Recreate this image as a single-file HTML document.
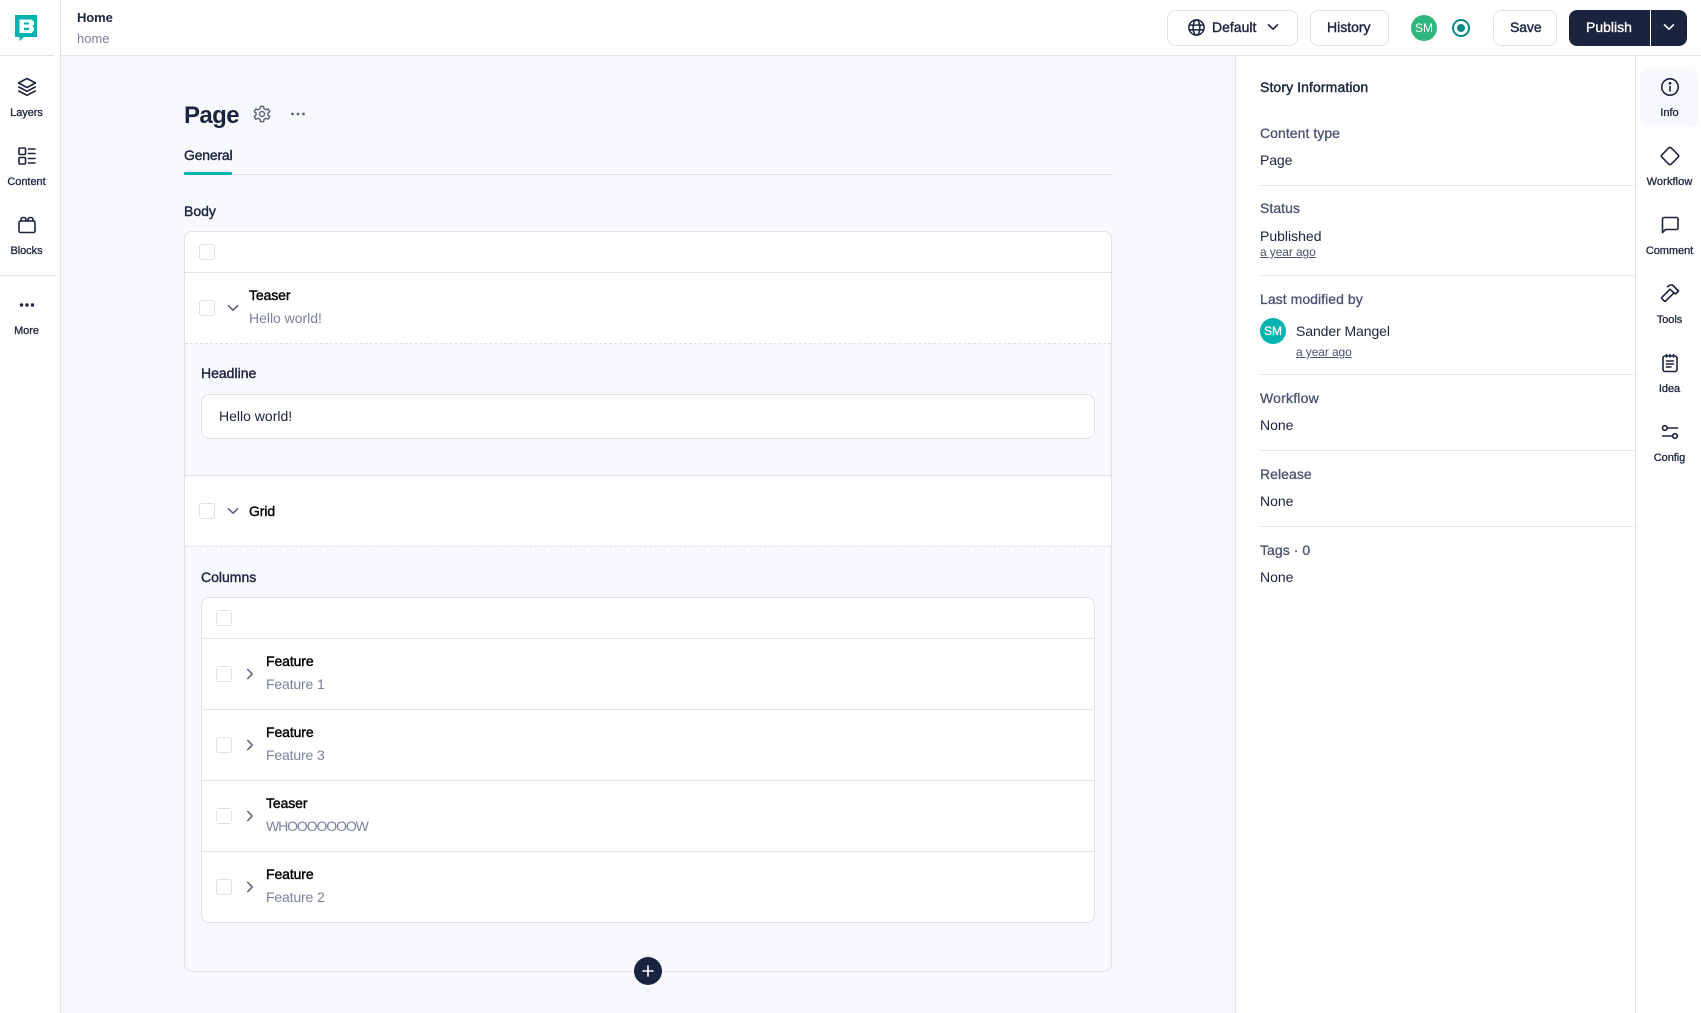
<!DOCTYPE html>
<html lang="en"><head><meta charset="utf-8"><title>Home</title>
<style>
html,body{margin:0;padding:0}
body{width:1701px;height:1013px;position:relative;overflow:hidden;background:#fff;font-family:"Liberation Sans",Arial,sans-serif;color:#1b243f;font-size:14px}
.a{position:absolute;box-sizing:border-box}
.t{position:absolute;white-space:nowrap;line-height:20px;height:20px}
.m{-webkit-text-stroke:.4px currentColor}
.n{font-size:11px;text-align:center;-webkit-text-stroke:.3px currentColor;letter-spacing:-.05px}
.k{color:#000}.s{color:#7b819c;letter-spacing:-.15px}.l{color:#4a5272;-webkit-text-stroke:.3px currentColor;letter-spacing:.05px}
.u{font-size:12px;text-decoration:underline;color:#4a5272;letter-spacing:-.1px}
.c{position:absolute;width:16px;height:16px;box-sizing:border-box;border:1px solid #dfe1e9;border-radius:3px;background:#fff}
.h{position:absolute;height:1px;background:#e0e2ea}
.b{position:absolute;box-sizing:border-box;background:#fff;border:1px solid #dfe1e9;border-radius:8px}
svg{position:absolute;fill:none;stroke:#1b243f;stroke-width:1.6;stroke-linecap:round;stroke-linejoin:round;overflow:visible}
svg.g{stroke:#5c627d}
</style></head><body>

<!-- main background -->
<div class="a" style="left:61px;top:56px;width:1175px;height:957px;background:#f8f9fd"></div>
<!-- structural lines -->
<div class="a" style="left:60px;top:0;width:1px;height:1013px;background:#e0e3ee"></div>
<div class="h" style="left:61px;top:55px;width:1640px"></div>
<div class="h" style="left:0;top:55px;width:54px;background:#e0e3ee"></div>
<div class="h" style="left:0;top:275px;width:56px"></div>
<div class="a" style="left:1235px;top:56px;width:1px;height:957px;background:#e6e7ee"></div>
<div class="a" style="left:1635px;top:56px;width:1px;height:957px;background:#e0e2ea"></div>

<!-- logo -->
<svg style="left:15px;top:15px" width="22" height="26" viewBox="0 0 22 26"><path style="stroke:none;fill:#00b3b0" d="M0 0H22V22H9L4.500 26V22H0Z"/><path style="stroke:none;fill:#fff" fill-rule="evenodd" d="M4.500 4.500H16.500L19 6.500V9.500L17.500 11 19 12.500V15.500L16.500 18H4.500ZM9 7.500V9.500H14V7.500ZM9 12.800V15H14V12.800Z"/></svg>

<!-- left nav -->
<svg style="left:17px;top:77px" width="20" height="20" viewBox="0 0 20 20"><path d="M10 1.500 18.500 6 10 10.500 1.500 6Z"/><path d="M1.800 10 10 14.300 18.200 10M1.800 14 10 18.300 18.200 14"/></svg>
<div class="t n" style="left:0;width:53px;top:103px">Layers</div>
<svg style="left:17px;top:146px" width="20" height="20" viewBox="0 0 20 20"><rect x="2" y="2" width="6.500" height="6.500" rx="1"/><rect x="2" y="11.500" width="6.500" height="6.500" rx="1"/><path d="M11.500 3H18M11.500 7.500H18M11.500 12.500H18M11.500 17H18"/></svg>
<div class="t n" style="left:0;width:53px;top:172px">Content</div>
<svg style="left:17px;top:215px" width="20" height="20" viewBox="0 0 20 20"><rect x="2" y="6" width="16" height="11.500" rx="1.500"/><path d="M4 6V4.500a2 2 0 0 1 2-2h1a2 2 0 0 1 2 2V6M11 6V4.500a2 2 0 0 1 2-2h1a2 2 0 0 1 2 2V6"/></svg>
<div class="t n" style="left:0;width:53px;top:241px">Blocks</div>
<svg style="left:17px;top:295px" width="20" height="20" viewBox="0 0 20 20"><circle cx="4.500" cy="10" r=".9" fill="#1b243f"/><circle cx="10" cy="10" r=".9" fill="#1b243f"/><circle cx="15.500" cy="10" r=".9" fill="#1b243f"/></svg>
<div class="t n" style="left:0;width:53px;top:321px">More</div>

<!-- top bar left -->
<div class="t" style="left:77px;top:8px;font-size:13px;font-weight:700;letter-spacing:-.1px">Home</div>
<div class="t s" style="left:77px;top:29px;font-size:13px;letter-spacing:0">home</div>

<!-- top bar right -->
<div class="b" style="left:1167px;top:10px;width:131px;height:36px"></div>
<svg style="left:1187px;top:18px" width="19" height="19" viewBox="0 0 20 20"><circle cx="10" cy="10" r="8"/><ellipse cx="10" cy="10" rx="3.600" ry="8"/><path d="M2.300 7.500H17.700M2.300 12.500H17.700"/></svg>
<div class="t m" style="left:1212px;top:17px">Default</div>
<svg style="left:1267px;top:21px" width="12" height="12" viewBox="0 0 12 12"><path d="M1.500 3.800 6 8.200 10.500 3.800"/></svg>
<div class="b" style="left:1310px;top:10px;width:79px;height:36px"></div>
<div class="t m" style="left:1327px;top:17px">History</div>
<div class="a" style="left:1411px;top:15px;width:26px;height:26px;border-radius:50%;background:#2fb67c;color:#fff;text-align:center;font-size:12px;line-height:27px">SM</div>
<svg style="left:1451px;top:18px" width="20" height="20" viewBox="0 0 20 20"><circle cx="10" cy="10" r="8" style="stroke:#0c8c80;stroke-width:2"/><circle cx="10" cy="10" r="4" style="stroke:none;fill:#0c8c80"/></svg>
<div class="b" style="left:1493px;top:10px;width:64px;height:36px"></div>
<div class="t m" style="left:1510px;top:17px;letter-spacing:-.1px">Save</div>
<div class="a" style="left:1569px;top:10px;width:81px;height:36px;background:#1b243f;border-radius:8px 0 0 8px"></div>
<div class="t" style="left:1586px;top:17px;color:#fff;-webkit-text-stroke:.35px #fff">Publish</div>
<div class="a" style="left:1651px;top:10px;width:36px;height:36px;background:#1b243f;border-radius:0 8px 8px 0"></div>
<svg style="left:1663px;top:21px;stroke:#fff" width="12" height="12" viewBox="0 0 12 12"><path d="M1.500 3.800 6 8.200 10.500 3.800"/></svg>

<!-- page head -->
<div class="t" style="left:184px;top:106px;font-size:24px;font-weight:700;letter-spacing:-.6px">Page</div>
<svg class="g" style="left:253px;top:105px" width="18" height="18" viewBox="0 0 20 20"><circle cx="10" cy="10" r="2.800"/><path d="M8.300 1.500H11.700L12.300 4.200 14.300 5.300 16.900 4.400 18.600 7.300 16.600 9.100V11L18.600 12.800 16.900 15.700 14.300 14.800 12.300 15.900 11.700 18.500H8.300L7.700 15.900 5.700 14.800 3.100 15.700 1.400 12.800 3.400 11V9.100L1.400 7.300 3.100 4.400 5.700 5.300 7.700 4.200Z"/></svg>
<svg class="g" style="left:289px;top:105px" width="18" height="18" viewBox="0 0 18 18"><circle cx="3.500" cy="9" r=".6" fill="#5c627d"/><circle cx="9" cy="9" r=".6" fill="#5c627d"/><circle cx="14.500" cy="9" r=".6" fill="#5c627d"/></svg>
<div class="t m" style="left:184px;top:145px;letter-spacing:-.2px">General</div>
<div class="h" style="left:184px;top:174px;width:928px;background:#dcdee6"></div>
<div class="a" style="left:184px;top:172px;width:48px;height:3px;background:#00b3b0;border-radius:1px"></div>
<div class="t m" style="left:184px;top:201px">Body</div>

<!-- Body box -->
<div class="a" style="left:184px;top:231px;width:928px;height:741px;border:1px solid #dfe1e9;border-radius:8px;background:#f8f9fd"></div>
<div class="a" style="left:185px;top:232px;width:926px;height:112px;background:#fff;border-radius:7px 7px 0 0"></div>
<div class="a" style="left:185px;top:476px;width:926px;height:70px;background:#fff"></div>
<div class="c" style="left:199px;top:244px"></div>
<div class="h" style="left:185px;top:272px;width:926px"></div>
<div class="c" style="left:199px;top:300px"></div>
<svg class="g" style="left:227px;top:302px" width="12" height="12" viewBox="0 0 12 12"><path d="M1.500 3.800 6 8.200 10.500 3.800"/></svg>
<div class="t m k" style="left:249px;top:285px;letter-spacing:-.1px">Teaser</div>
<div class="t s" style="left:249px;top:308px;letter-spacing:-.02px">Hello world!</div>
<div class="a" style="left:185px;top:343px;width:926px;border-top:1px dashed #dfe1e9"></div>

<div class="t m" style="left:201px;top:363px">Headline</div>
<div class="b" style="left:201px;top:394px;width:894px;height:45px"></div>
<div class="t" style="left:219px;top:406px">Hello world!</div>
<div class="h" style="left:185px;top:475px;width:926px"></div>

<div class="c" style="left:199px;top:503px"></div>
<svg class="g" style="left:227px;top:505px" width="12" height="12" viewBox="0 0 12 12"><path d="M1.500 3.800 6 8.200 10.500 3.800"/></svg>
<div class="t m k" style="left:249px;top:501px;letter-spacing:-.1px">Grid</div>
<div class="a" style="left:185px;top:546px;width:926px;border-top:1px dashed #dfe1e9"></div>
<div class="t m" style="left:201px;top:567px">Columns</div>

<!-- Columns box -->
<div class="b" style="left:201px;top:597px;width:894px;height:326px"></div>
<div class="c" style="left:216px;top:610px"></div>
<div class="h" style="left:202px;top:638px;width:892px"></div>

<div class="c" style="left:216px;top:666px"></div>
<svg class="g" style="left:244px;top:668px" width="12" height="12" viewBox="0 0 12 12"><path d="M3.800 1.500 8.200 6 3.800 10.500"/></svg>
<div class="t m k" style="left:266px;top:651px;letter-spacing:-.1px">Feature</div>
<div class="t s" style="left:266px;top:674px">Feature 1</div>
<div class="h" style="left:202px;top:709px;width:892px"></div>

<div class="c" style="left:216px;top:737px"></div>
<svg class="g" style="left:244px;top:739px" width="12" height="12" viewBox="0 0 12 12"><path d="M3.800 1.500 8.200 6 3.800 10.500"/></svg>
<div class="t m k" style="left:266px;top:722px;letter-spacing:-.1px">Feature</div>
<div class="t s" style="left:266px;top:745px">Feature 3</div>
<div class="h" style="left:202px;top:780px;width:892px"></div>

<div class="c" style="left:216px;top:808px"></div>
<svg class="g" style="left:244px;top:810px" width="12" height="12" viewBox="0 0 12 12"><path d="M3.800 1.500 8.200 6 3.800 10.500"/></svg>
<div class="t m k" style="left:266px;top:793px;letter-spacing:-.1px">Teaser</div>
<div class="t s" style="left:266px;top:816px;letter-spacing:-1.1px">WHOOOOOOOW</div>
<div class="h" style="left:202px;top:851px;width:892px"></div>

<div class="c" style="left:216px;top:879px"></div>
<svg class="g" style="left:244px;top:881px" width="12" height="12" viewBox="0 0 12 12"><path d="M3.800 1.500 8.200 6 3.800 10.500"/></svg>
<div class="t m k" style="left:266px;top:864px;letter-spacing:-.1px">Feature</div>
<div class="t s" style="left:266px;top:887px">Feature 2</div>

<!-- plus -->
<div class="a" style="left:634px;top:957px;width:28px;height:28px;border-radius:50%;background:#1b243f"></div>
<svg style="left:642px;top:965px;stroke:#fff" width="12" height="12" viewBox="0 0 12 12"><path d="M6 1V11M1 6H11"/></svg>

<!-- story info -->
<div class="t m" style="left:1260px;top:77px;letter-spacing:.1px">Story Information</div>
<div class="t l" style="left:1260px;top:123px">Content type</div>
<div class="t" style="left:1260px;top:150px;letter-spacing:-.1px">Page</div>
<div class="h" style="left:1260px;top:185px;width:375px;background:#e8e9ef"></div>
<div class="t l" style="left:1260px;top:198px">Status</div>
<div class="t" style="left:1260px;top:226px">Published</div>
<div class="t u" style="left:1260px;top:242px">a year ago</div>
<div class="h" style="left:1260px;top:275px;width:375px;background:#e8e9ef"></div>
<div class="t l" style="left:1260px;top:289px">Last modified by</div>
<div class="a" style="left:1260px;top:318px;width:26px;height:26px;border-radius:50%;background:#00b3b0;color:#fff;text-align:center;font-size:12px;line-height:27px;-webkit-text-stroke:.3px #fff">SM</div>
<div class="t" style="left:1296px;top:321px;letter-spacing:-.08px">Sander Mangel</div>
<div class="t u" style="left:1296px;top:342px">a year ago</div>
<div class="h" style="left:1260px;top:374px;width:375px;background:#e8e9ef"></div>
<div class="t l" style="left:1260px;top:388px;letter-spacing:.2px">Workflow</div>
<div class="t" style="left:1260px;top:415px">None</div>
<div class="h" style="left:1260px;top:450px;width:375px;background:#e8e9ef"></div>
<div class="t l" style="left:1260px;top:464px">Release</div>
<div class="t" style="left:1260px;top:491px">None</div>
<div class="h" style="left:1260px;top:526px;width:375px;background:#e8e9ef"></div>
<div class="t l" style="left:1260px;top:540px">Tags · 0</div>
<div class="t" style="left:1260px;top:567px">None</div>

<!-- right rail -->
<div class="a" style="left:1640px;top:68px;width:59px;height:59px;border-radius:8px;background:#f8f9fd"></div>
<svg style="left:1660px;top:77px" width="20" height="20" viewBox="0 0 20 20"><circle cx="10" cy="10" r="8.200"/><path d="M10 9.500V14"/><circle cx="10" cy="6.300" r=".6" fill="#1b243f"/></svg>
<div class="t n" style="left:1640px;width:59px;top:103px">Info</div>
<svg style="left:1660px;top:146px" width="20" height="20" viewBox="0 0 20 20"><path d="M8.900 1.800a1.600 1.600 0 0 1 2.200 0L18.200 8.900a1.600 1.600 0 0 1 0 2.200L11.100 18.200a1.600 1.600 0 0 1-2.200 0L1.800 11.100a1.600 1.600 0 0 1 0-2.200Z"/></svg>
<div class="t n" style="left:1637px;width:65px;top:172px;letter-spacing:.1px">Workflow</div>
<svg style="left:1660px;top:215px" width="20" height="20" viewBox="0 0 20 20"><path d="M2.500 17.500V4a1.500 1.500 0 0 1 1.500-1.500H16.500A1.500 1.500 0 0 1 18 4V13a1.500 1.500 0 0 1-1.500 1.500H5.500Z"/></svg>
<div class="t n" style="left:1637px;width:65px;top:241px">Comment</div>
<svg style="left:1660px;top:283px" width="20" height="20" viewBox="0 0 20 20"><path d="M9.800 6.300 2 14.300a1 1 0 0 0 0 1.400L4.300 18a1 1 0 0 0 1.400 0L13.700 10.200"/><path d="M7.500 3.800 10 2h2.500L18.500 8 15.500 11 9.800 6.300"/></svg>
<div class="t n" style="left:1640px;width:59px;top:310px">Tools</div>
<svg style="left:1660px;top:353px" width="20" height="20" viewBox="0 0 20 20"><rect x="3" y="3" width="14" height="15.500" rx="2"/><path d="M6.500 1.500V4M10 1.500V4M13.500 1.500V4M6.500 8H13.500M6.500 11H13.500M6.500 14H11"/></svg>
<div class="t n" style="left:1640px;width:59px;top:379px">Idea</div>
<svg style="left:1660px;top:422px" width="20" height="20" viewBox="0 0 20 20"><circle cx="4.800" cy="6" r="2.300"/><circle cx="15" cy="14" r="2.300"/><path d="M7.300 6H17.500M2.500 14H12.500"/></svg>
<div class="t n" style="left:1640px;width:59px;top:448px">Config</div>

</body></html>
